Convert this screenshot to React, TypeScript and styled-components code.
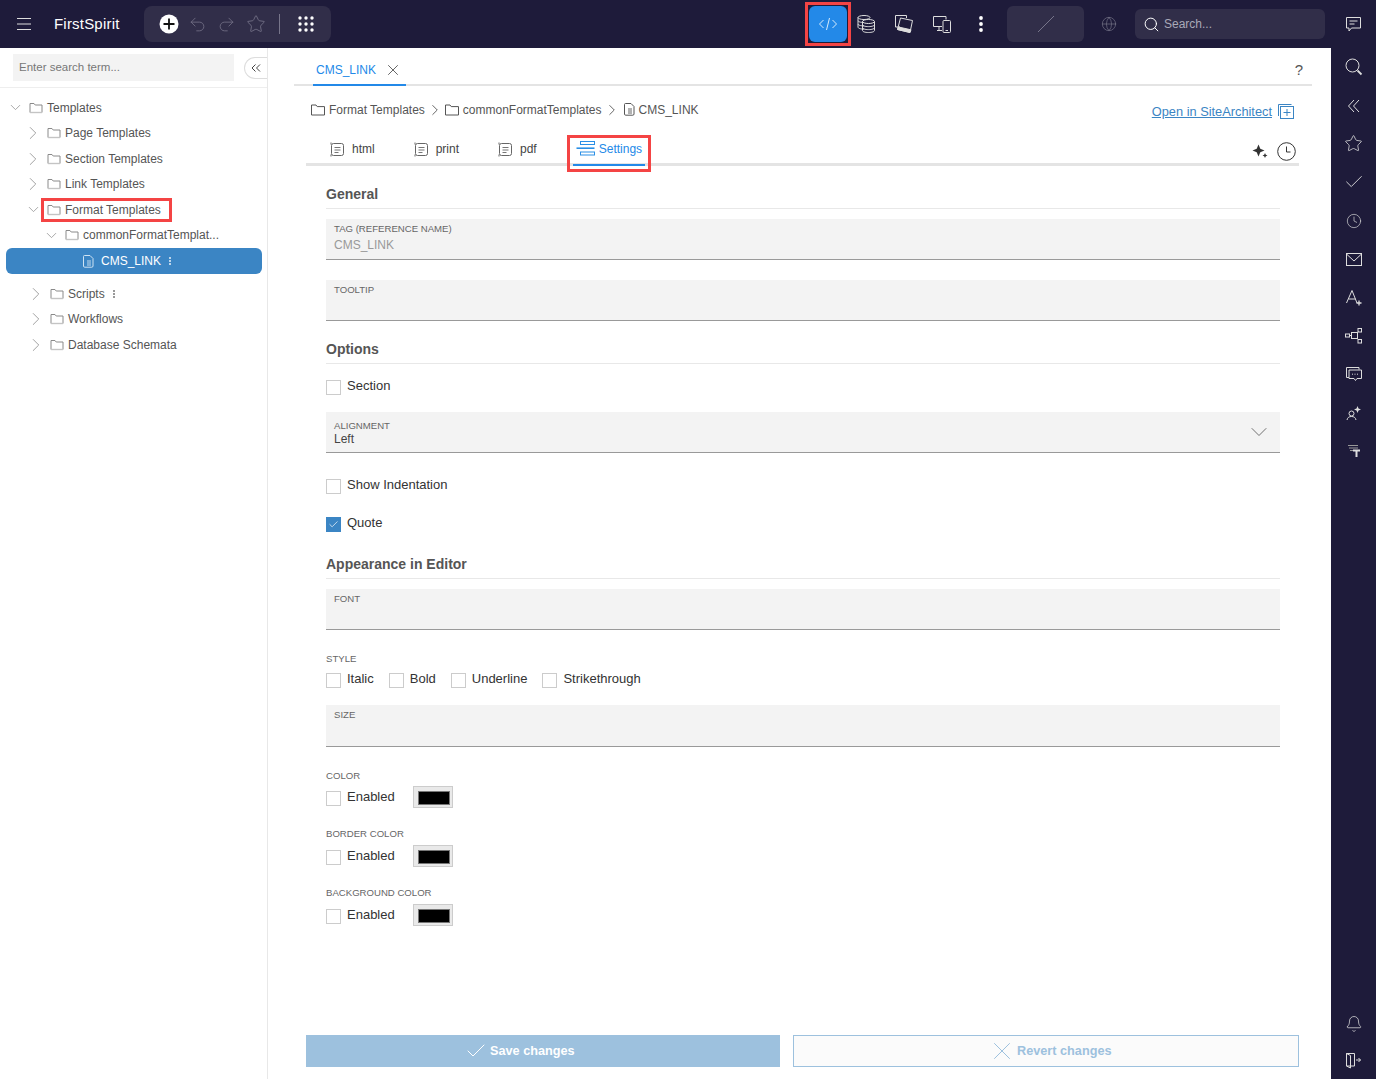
import React from "react";
import styled, { createGlobalStyle } from "styled-components";
import {
  Bell,
  Check,
  ChevronDown,
  ChevronRight,
  Clock,
  Globe,
  Redo2,
  Search,
  Star,
  Undo2,
  X,
} from "lucide-react";

const GlobalStyle = createGlobalStyle`
  html, body {
    margin: 0;
    height: 100%;
    overflow: hidden;
    background: #fff;
    font-family: "Liberation Sans", Arial, sans-serif;
    font-size: 12px;
    color: #555;
  }
  #root { height: 100%; }
  * { box-sizing: border-box; }
  svg { flex: none; }
`;

/* ---------- icons that the packages do not have ---------- */

const FolderIcon = () => (
  <svg width="14" height="12" viewBox="0 0 14 12" fill="none" stroke="#8a8a8a">
    <path d="M1 10.5V1.5h4l1.2 1.5h6.8v7.5z" />
    <path d="M1 10.5h12" stroke="#c4c4c4" strokeWidth="1.4" />
  </svg>
);

const DarkFolderIcon = () => (
  <svg width="14" height="12" viewBox="0 0 14 12" fill="none" stroke="#555">
    <path d="M.5 11V1h4.5l1.2 1.6h7.3V11z" />
  </svg>
);

const FileIcon = ({ color = "#555" }: { color?: string }) => (
  <svg width="11" height="13" viewBox="0 0 11 13" fill="none" stroke={color}>
    <path d="M1.5.5h5.5l3 3v7.5a1.2 1.2 0 0 1-1.2 1.2H1.7A1.2 1.2 0 0 1 .5 11V1.5a1 1 0 0 1 1-1z" />
    <path d="M4 6h4M4 8h4M4 10h4" strokeWidth=".9" />
  </svg>
);

const TemplateTabIcon = () => (
  <svg width="15" height="15" viewBox="0 0 15 15" fill="none" stroke="#666">
    <rect x="1.5" y="1.5" width="12" height="12" rx="2" />
    <path d="M4.5 5.5h6M4.5 8h6M4.5 10.5h4" strokeWidth=".9" />
    <path d="M1 .5v2M1 12.5v2" strokeWidth="1" />
  </svg>
);

const SettingsIcon = () => (
  <svg width="19" height="15" viewBox="0 0 19 15" fill="none" stroke="#2a8fe6">
    <rect x="4.5" y=".5" width="14" height="3" />
    <path d="M.5 7.2h18" strokeWidth="1.6" />
    <rect x="4.5" y="11" width="14" height="3" />
  </svg>
);

const MenuIcon = () => (
  <svg width="16" height="14" viewBox="0 0 16 14" stroke="#ddd" strokeWidth="1">
    <path d="M1 1.5h14M1 7h14M1 12.5h14" />
  </svg>
);

const AddIcon = () => (
  <svg width="20" height="20" viewBox="0 0 20 20">
    <circle cx="10" cy="10" r="9.5" fill="#fff" />
    <path d="M10 4.5v11M4.5 10h11" stroke="#111" strokeWidth="1.8" />
  </svg>
);

const GridIcon = () => (
  <svg width="16" height="16" viewBox="0 0 16 16" fill="#fff">
    {[2, 8, 14].map((y) =>
      [2, 8, 14].map((x) => <circle key={`${x}-${y}`} cx={x} cy={y} r="1.7" />)
    )}
  </svg>
);

const CodeIcon = () => (
  <svg width="20" height="14" viewBox="0 0 20 14" fill="none" stroke="#d6ebfc">
    <path d="M5.500 3 1.500 7l4 4M14.500 3l4 4-4 4M11.500 1 8.500 13" />
  </svg>
);

const DatabaseIcon = () => (
  <svg width="20" height="20" viewBox="0 0 20 20" fill="none" stroke="#ddd">
    <ellipse cx="8" cy="3.500" rx="6" ry="2" />
    <path d="M2 3.500v3c0 1.200 2.600 2 6 2M2 6.500v3.400c0 1.200 2.600 2 6 2M2 9.900v3.200c0 1.200 2.600 2 6 2" />
    <ellipse cx="12.500" cy="7.500" rx="6" ry="2" />
    <path d="M6.500 7.500v9c0 1.200 2.600 2 6 2s6-.8 6-2v-9M6.500 10.600c0 1.200 2.600 2 6 2s6-.8 6-2M6.500 13.600c0 1.200 2.600 2 6 2s6-.8 6-2" />
  </svg>
);

const PhotosIcon = () => (
  <svg width="20" height="20" viewBox="0 0 20 20" fill="none" stroke="#ddd">
    <path d="M6 13H1.500V1.500h11v2.500" />
    <path d="M6.500 4 18.500 6.500 16 18.500 3.500 15.500z" />
    <path d="M4.500 13 17 15.800 16 18.500 3.500 15.500z" fill="#ddd" />
  </svg>
);

const DevicesIcon = () => (
  <svg width="20" height="18" viewBox="0 0 20 18" fill="none" stroke="#ddd">
    <path d="M10 11.500H1.500v-10H14v3M5 15.500h5M7 11.500v4" />
    <rect x="11" y="5.500" width="7.500" height="12" rx="1" />
    <path d="M13.500 15.500h2.500" />
  </svg>
);

const DotsIcon = ({ color = "#fff", size = 16 }: { color?: string; size?: number }) => (
  <svg width="4" height={size} viewBox={`0 0 4 ${size}`} fill={color}>
    <circle cx="2" cy="2" r={size > 12 ? 1.9 : 1} />
    <circle cx="2" cy={size / 2} r={size > 12 ? 1.9 : 1} />
    <circle cx="2" cy={size - 2} r={size > 12 ? 1.9 : 1} />
  </svg>
);

const ChatIcon = () => (
  <svg width="17" height="17" viewBox="0 0 17 17" fill="none" stroke="#ddd">
    <path d="M1.500 1.500h14v10.500h-9l-2.500 3v-3h-2.500z" />
    <path d="M4.500 5h8M4.500 8h5" />
  </svg>
);

const RailSearchIcon = () => (
  <svg width="18" height="18" viewBox="0 0 18 18" fill="none" stroke="#ddd">
    <circle cx="7.500" cy="7.500" r="6.500" />
    <path d="M12.500 12.500 16.500 16.500" strokeWidth="1.800" />
  </svg>
);

const RailChevronsIcon = () => (
  <svg width="14" height="14" viewBox="0 0 14 14" fill="none" stroke="#ddd">
    <path d="M7 1 1.500 7 7 13M12 1 6.500 7 12 13" />
  </svg>
);

const MailIcon = () => (
  <svg width="16" height="13" viewBox="0 0 16 13" fill="none" stroke="#ddd">
    <rect x=".5" y=".5" width="15" height="12" />
    <path d="M.5 1 8 8l7.500-7" />
  </svg>
);

const FontSparkIcon = () => (
  <svg width="18" height="18" viewBox="0 0 18 18" fill="none" stroke="#ddd">
    <path d="M1.500 14 7 1.500 12 14M3.500 10h7" />
    <path d="M14 11.500v5M11.500 14h5" strokeWidth="1.300" />
  </svg>
);

const TreeIcon = () => (
  <svg width="18" height="16" viewBox="0 0 18 16" fill="none" stroke="#ddd">
    <rect x=".5" y="6" width="4" height="3" />
    <rect x="6.500" y="4.500" width="6" height="6" />
    <rect x="13" y=".5" width="3.500" height="3.500" />
    <rect x="13" y="11.500" width="3.500" height="3.500" />
    <path d="M4.500 7.500h2M12.500 4.500l1-1M12.500 10.500l1 1" />
  </svg>
);

const CommentsIcon = () => (
  <svg width="16" height="15" viewBox="0 0 16 15" fill="none" stroke="#ddd">
    <path d="M3 10.500H.500V.500h12.500v2" />
    <path d="M3 3h12.500v8.500H11l-1.500 2-1.500-2H3z" />
    <path d="M6 7.200h1M8.500 7.200h1M11 7.200h1" />
  </svg>
);

const UserSparkIcon = () => (
  <svg width="16" height="16" viewBox="0 0 16 16" fill="none" stroke="#ddd">
    <circle cx="5.500" cy="8.500" r="2.500" />
    <path d="M1 15c.5-2.500 2-3.500 4.500-3.500S9.500 12.500 10 15" />
    <path d="M11.500 1 12.500 3.500 15 4.500 12.500 5.500 11.500 8 10.500 5.500 8 4.500 10.500 3.500z" fill="#ddd" stroke="none" />
  </svg>
);

const TextFilterIcon = () => (
  <svg width="14" height="14" viewBox="0 0 14 14" fill="none" stroke="#999">
    <path d="M1 1.500h10M2 4h9M3 6.500h3" />
    <path d="M6 6.500h7M9.500 6v7" stroke="#ddd" strokeWidth="2" />
  </svg>
);

const ExitIcon = () => (
  <svg width="17" height="17" viewBox="0 0 17 17" fill="none" stroke="#ddd">
    <path d="M1.500 1.500h8v12.500h-8zM1.500 1.500l4 2v12.500l-4-2z" />
    <path d="M11 8h4.500M13.500 6l2 2-2 2" />
  </svg>
);

const SitePanelIcon = () => (
  <svg width="16" height="15" viewBox="0 0 16 15" fill="none" stroke="#3b85c4">
    <path d="M.5 12V.5h13" />
    <rect x="2.500" y="2.500" width="13" height="12" />
    <path d="M9 5v7M5.500 8.500h7" />
  </svg>
);

const SparkleIcon = () => (
  <svg width="16" height="16" viewBox="0 0 16 16" fill="#333">
    <path d="M6.500 1.500 8.300 5.700 12.500 7.500 8.300 9.300 6.500 13.500 4.700 9.300.5 7.500 4.700 5.700z" />
    <path d="M13 10l.8 1.700 1.700.8-1.700.8L13 15l-.8-1.700-1.700-.8 1.700-.8z" />
  </svg>
);

const ClockPlainIcon = () => (
  <svg width="19" height="19" viewBox="0 0 19 19" fill="none" stroke="#333">
    <circle cx="9.500" cy="9.500" r="8.800" />
    <path d="M9.500 4.500v5.500h4" />
  </svg>
);

/* ---------- shell ---------- */

const Page = styled.div`
  display: flex;
  flex-direction: column;
  height: 100vh;
`;

const TopBar = styled.header`
  display: flex;
  align-items: center;
  flex: none;
  height: 48px;
  background: #1e1b3a;
  color: #fff;
`;

const MenuButton = styled.div`
  display: flex;
  justify-content: center;
  width: 20px;
  margin: 0 20px 0 14px;
`;

const Brand = styled.div`
  width: 90px;
  padding-bottom: 1px;
  font-size: 15px;
  letter-spacing: 0.2px;
`;

const ToolGroup = styled.div`
  display: flex;
  align-items: center;
  width: 187px;
  height: 36px;
  padding-left: 15px;
  border-radius: 8px;
  background: #312e49;
  color: #77758a;
`;

const ToolCell = styled.div<{ $w: number; $after?: number }>`
  display: flex;
  align-items: center;
  justify-content: center;
  width: ${(p) => p.$w}px;
  margin-right: ${(p) => p.$after ?? 0}px;
`;

const ToolDivider = styled.div`
  width: 1px;
  height: 20px;
  margin: 0 18px 0 9px;
  background: #77758a;
`;

const TopRight = styled.div`
  display: flex;
  align-items: center;
  margin-left: auto;
`;

const ActiveFrame = styled.div`
  width: 46px;
  height: 44px;
  margin: 0 -4px;
  padding: 1px;
  border: 3px solid #f44444;
`;

const ActiveView = styled.div`
  display: flex;
  align-items: center;
  justify-content: center;
  height: 100%;
  border-radius: 6px;
  background: #2389e8;
`;

const ViewCell = styled.div`
  display: flex;
  align-items: center;
  justify-content: center;
  width: 38px;
`;

const DotsCell = styled(ViewCell)`
  width: 39px;
`;

const SlashBox = styled.div`
  display: flex;
  align-items: center;
  justify-content: center;
  width: 77px;
  height: 36px;
  margin-left: 7px;
  border-radius: 6px;
  background: #312e49;
`;

const GlobeCell = styled.div`
  display: flex;
  justify-content: center;
  width: 24px;
  margin: 0 14px 0 13px;
  color: #77758a;
`;

const TopSearch = styled.div`
  display: flex;
  align-items: center;
  gap: 4px;
  width: 190px;
  height: 30px;
  padding-left: 8px;
  border-radius: 6px;
  background: #312e49;
  color: #aaa9b8;
`;

const ChatCell = styled.div`
  display: flex;
  justify-content: center;
  width: 45px;
  margin-left: 6px;
`;

const Body = styled.div`
  display: flex;
  flex: 1;
  min-height: 0;
`;

/* ---------- tree ---------- */

const Sidebar = styled.aside`
  flex: none;
  width: 268px;
  border-right: 1px solid #e8e8e8;
`;

const SearchRow = styled.div`
  display: flex;
  align-items: center;
  height: 40px;
  padding-left: 13px;
  border-bottom: 1px solid #eee;
`;

const TreeSearch = styled.div`
  display: flex;
  align-items: center;
  width: 221px;
  height: 27px;
  padding: 0 0 2px 6px;
  background: #f3f3f3;
  color: #777;
  font-size: 11.5px;
`;

const CollapseButton = styled.div`
  display: flex;
  align-items: center;
  justify-content: center;
  width: 23px;
  height: 22px;
  margin-left: 10px;
  border: 1px solid #ddd;
  border-right: none;
  border-radius: 11px 0 0 11px;
  color: #444;
`;

const Tree = styled.div`
  padding-top: 7px;
`;

const TreeRow = styled.div<{ $pad: number }>`
  display: flex;
  align-items: center;
  height: 25.5px;
  padding-left: ${(p) => p.$pad}px;
  color: #555;
`;

const Twisty = styled.div`
  display: flex;
  justify-content: center;
  width: 10px;
  margin-right: 9px;
  color: #999;
`;

const TreeFolder = styled.div`
  display: flex;
  margin-right: 4px;
`;

const HighlightLabel = styled.div`
  display: flex;
  align-items: center;
  height: 18px;
  margin-left: -3px;
  padding: 0 8px 0 3px;
  outline: 3px solid #f44444;
`;

const SelectedRow = styled.div`
  display: flex;
  align-items: center;
  gap: 7px;
  height: 26px;
  margin: 0 5px 7px 6px;
  padding-left: 77px;
  border-radius: 6px;
  background: #3b85c4;
  color: #fff;
`;

const RowDots = styled.span`
  display: inline-flex;
  margin-left: 7px;
`;

/* ---------- main ---------- */

const Main = styled.main`
  display: flex;
  flex-direction: column;
  flex: 1;
  min-width: 0;
`;

const TabStrip = styled.div`
  display: flex;
  align-items: flex-end;
  justify-content: space-between;
  flex: none;
  height: 38px;
  margin: 0 19px 0 26px;
  padding-left: 19px;
  border-bottom: 2px solid #e4e4e4;
`;

const DocTab = styled.div`
  display: flex;
  align-items: center;
  gap: 8px;
  width: 93px;
  height: 32px;
  margin-bottom: -2px;
  padding: 2px 0 0 3px;
  border-bottom: 2px solid #2389e8;
  color: #2389e8;
  & > svg {
    color: #555;
  }
`;

const Help = styled.div`
  height: 32px;
  padding: 10px 9px 0 0;
  color: #555;
  font-size: 15px;
  line-height: 16px;
`;

const CrumbRow = styled.div`
  display: flex;
  align-items: center;
  flex: none;
  height: 25px;
  margin: 11px 37px 0 43px;
  color: #555;
`;

const Crumb = styled.div`
  display: flex;
  align-items: center;
  gap: 4px;
`;

const CrumbSep = styled.div<{ $after?: number }>`
  display: flex;
  margin: 0 ${(p) => p.$after ?? 1}px 0 1px;
  color: #555;
`;

const SiteLink = styled.a`
  display: flex;
  align-items: center;
  gap: 6px;
  margin-left: auto;
  padding-top: 3px;
  color: #3b85c4;
  font-size: 12.8px;
  text-decoration: underline;
`;

const SubTabs = styled.div`
  display: flex;
  align-items: center;
  flex: none;
  height: 31px;
  margin: 13px 32px 0 38px;
  padding-left: 4.5px;
  border-bottom: 3px solid #e4e4e4;
`;

const SubTab = styled.div`
  display: flex;
  align-items: center;
  gap: 7px;
  height: 100%;
  padding: 0 19.5px;
  color: #444;
`;

const SettingsTab = styled.div`
  display: flex;
  align-items: center;
  align-self: flex-end;
  gap: 4px;
  height: 25px;
  margin: 0 0 -3px 16.5px;
  padding: 0 3px 8px;
  border-bottom: 2px solid #2389e8;
  color: #2389e8;
  outline: 3px solid #f44444;
  outline-offset: 3px;
`;

const SubActions = styled.div`
  display: flex;
  align-items: center;
  gap: 9px;
  margin-left: auto;
  padding: 4px 3px 0 0;
`;

const Form = styled.div`
  flex: 1;
  margin: 0 51px 0 58px;
`;

const Heading = styled.h3<{ $top: number }>`
  height: 29px;
  margin: ${(p) => p.$top}px 0 0;
  padding-top: 6px;
  border-bottom: 1px solid #e8e8e8;
  color: #555;
  font-size: 14px;
  font-weight: 700;
  line-height: 16px;
`;

const Field = styled.div<{ $top: number; $h?: number; $padTop?: number }>`
  position: relative;
  height: ${(p) => p.$h ?? 41}px;
  margin-top: ${(p) => p.$top}px;
  padding: ${(p) => p.$padTop ?? 4}px 8px 0;
  border-bottom: 1px solid #999;
  background: #f3f3f3;
`;

const FieldLabel = styled.div`
  height: 12px;
  color: #666;
  font-size: 9.6px;
  line-height: 12px;
  text-transform: uppercase;
`;

const FieldValue = styled.div<{ $muted?: boolean }>`
  height: 16px;
  margin-top: ${(p) => (p.$muted ? 2 : -1)}px;
  color: ${(p) => (p.$muted ? "#999" : "#444")};
  font-size: 12px;
  line-height: 16px;
`;

const SelectArrow = styled.div`
  position: absolute;
  top: 6px;
  right: 7px;
  display: flex;
  color: #666;
`;

const CheckRow = styled.div<{ $top: number }>`
  display: flex;
  align-items: center;
  height: 22px;
  margin-top: ${(p) => p.$top}px;
`;

const CheckLabel = styled.label`
  display: flex;
  align-items: center;
  gap: 6px;
  margin-right: 15px;
  padding-bottom: 2px;
  color: #333;
  font-size: 13px;
`;

const Box = styled.span<{ $on?: boolean }>`
  display: inline-flex;
  align-items: center;
  justify-content: center;
  width: 15px;
  height: 15px;
  margin-top: 4px;
  border: 1px solid ${(p) => (p.$on ? "#3b85c4" : "#ccc")};
  background: ${(p) => (p.$on ? "#3b85c4" : "#fff")};
  color: #fff;
`;

const GroupLabel = styled.div<{ $top: number }>`
  height: 12px;
  margin-top: ${(p) => p.$top}px;
  color: #666;
  font-size: 9.6px;
  line-height: 12px;
  text-transform: uppercase;
`;

const Swatch = styled.div`
  width: 40px;
  height: 22px;
  padding: 4px;
  border: 1px solid #ccc;
  background: #e9e9e9;
  &::after {
    content: "";
    display: block;
    width: 100%;
    height: 100%;
    border: 1px solid #777;
    background: #000;
  }
`;

const ColorRow = styled.div<{ $top: number }>`
  display: flex;
  align-items: center;
  height: 22px;
  margin-top: ${(p) => p.$top}px;
  & > label {
    margin-right: 18px;
  }
`;

const Footer = styled.div`
  display: grid;
  grid-template-columns: 474px 506px;
  column-gap: 13px;
  flex: none;
  margin: 0 32px 12px 38px;
`;

const SaveButton = styled.div`
  display: flex;
  align-items: center;
  gap: 2px;
  height: 32px;
  padding-left: 158px;
  background: #9dc1de;
  color: #fff;
  font-size: 12.7px;
  font-weight: 700;
`;

const RevertButton = styled.div`
  display: flex;
  align-items: center;
  height: 32px;
  padding-left: 193px;
  border: 1px solid #9dc1de;
  background: #fbfbfb;
  color: #9dc1de;
  font-size: 12.7px;
  font-weight: 700;
`;

/* ---------- right rail ---------- */

const Rail = styled.nav`
  display: flex;
  flex-direction: column;
  justify-content: space-between;
  flex: none;
  width: 45px;
  background: #1e1b3a;
  color: #ddd;
`;

const RailGroup = styled.div`
  display: flex;
  flex-direction: column;
`;

const RailCell = styled.div`
  display: flex;
  align-items: center;
  justify-content: center;
  height: 38.4px;
`;

const RailBottomCell = styled(RailCell)`
  height: 37px;
`;

/* ---------- data ---------- */

const treeTop = ["Page Templates", "Section Templates", "Link Templates"];
const treeBottom = ["Workflows", "Database Schemata"];

const railIcons = [
  <RailSearchIcon key="s" />,
  <RailChevronsIcon key="c" />,
  <Star key="st" size={19} strokeWidth={1} />,
  <Check key="ch" size={22} strokeWidth={1} />,
  <Clock key="cl" size={16} strokeWidth={1} />,
  <MailIcon key="m" />,
  <FontSparkIcon key="f" />,
  <TreeIcon key="t" />,
  <CommentsIcon key="cm" />,
  <UserSparkIcon key="u" />,
  <TextFilterIcon key="tf" />,
];

const Check15 = ({ label, on }: { label: string; on?: boolean }) => (
  <CheckLabel>
    <Box $on={on}>{on && <Check size={11} strokeWidth={1.5} />}</Box>
    {label}
  </CheckLabel>
);

const TwistyOpen = () => (
  <Twisty>
    <ChevronDown size={17} strokeWidth={1.2} />
  </Twisty>
);

const TwistyClosed = () => (
  <Twisty>
    <ChevronRight size={22} strokeWidth={1} />
  </Twisty>
);

export default function App() {
  return (
    <Page>
      <GlobalStyle />
      <TopBar>
        <MenuButton>
          <MenuIcon />
        </MenuButton>
        <Brand>FirstSpirit</Brand>
        <ToolGroup>
          <ToolCell $w={20} $after={4}>
            <AddIcon />
          </ToolCell>
          <ToolCell $w={29}>
            <Undo2 size={19} strokeWidth={1} />
          </ToolCell>
          <ToolCell $w={29}>
            <Redo2 size={19} strokeWidth={1} />
          </ToolCell>
          <ToolCell $w={29}>
            <Star size={20} strokeWidth={1} />
          </ToolCell>
          <ToolDivider />
          <ToolCell $w={16}>
            <GridIcon />
          </ToolCell>
        </ToolGroup>
        <TopRight>
          <ActiveFrame>
            <ActiveView>
              <CodeIcon />
            </ActiveView>
          </ActiveFrame>
          <ViewCell>
            <DatabaseIcon />
          </ViewCell>
          <ViewCell>
            <PhotosIcon />
          </ViewCell>
          <ViewCell>
            <DevicesIcon />
          </ViewCell>
          <DotsCell>
            <DotsIcon />
          </DotsCell>
          <SlashBox>
            <svg width="18" height="18" viewBox="0 0 18 18" stroke="#77758a">
              <path d="M1 17 17 1" />
            </svg>
          </SlashBox>
          <GlobeCell>
            <Globe size={16} strokeWidth={1} />
          </GlobeCell>
          <TopSearch>
            <Search size={17} strokeWidth={1.4} color="#fff" />
            Search...
          </TopSearch>
          <ChatCell>
            <ChatIcon />
          </ChatCell>
        </TopRight>
      </TopBar>
      <Body>
        <Sidebar>
          <SearchRow>
            <TreeSearch>Enter search term...</TreeSearch>
            <CollapseButton>
              <svg width="10" height="8" viewBox="0 0 10 8" fill="none" stroke="#444">
                <path d="M4.500.5 1 4l3.500 3.500M9 .5 5.500 4 9 7.500" />
              </svg>
            </CollapseButton>
          </SearchRow>
          <Tree>
            <TreeRow $pad={10}>
              <TwistyOpen />
              <TreeFolder>
                <FolderIcon />
              </TreeFolder>
              Templates
            </TreeRow>
            {treeTop.map((label) => (
              <TreeRow key={label} $pad={28}>
                <TwistyClosed />
                <TreeFolder>
                  <FolderIcon />
                </TreeFolder>
                {label}
              </TreeRow>
            ))}
            <TreeRow $pad={28}>
              <TwistyOpen />
              <HighlightLabel>
                <TreeFolder>
                  <FolderIcon />
                </TreeFolder>
                Format Templates
              </HighlightLabel>
            </TreeRow>
            <TreeRow $pad={46}>
              <TwistyOpen />
              <TreeFolder>
                <FolderIcon />
              </TreeFolder>
              commonFormatTemplat...
            </TreeRow>
            <SelectedRow>
              <FileIcon color="#cfe3f3" />
              <span>CMS_LINK</span>
              <DotsIcon color="#e8f1f8" size={10} />
            </SelectedRow>
            <TreeRow $pad={31}>
              <TwistyClosed />
              <TreeFolder>
                <FolderIcon />
              </TreeFolder>
              Scripts
              <RowDots>
                <DotsIcon color="#777" size={10} />
              </RowDots>
            </TreeRow>
            {treeBottom.map((label) => (
              <TreeRow key={label} $pad={31}>
                <TwistyClosed />
                <TreeFolder>
                  <FolderIcon />
                </TreeFolder>
                {label}
              </TreeRow>
            ))}
          </Tree>
        </Sidebar>
        <Main>
          <TabStrip>
            <DocTab>
              CMS_LINK
              <X size={18} strokeWidth={1.2} />
            </DocTab>
            <Help>?</Help>
          </TabStrip>
          <CrumbRow>
            <Crumb>
              <DarkFolderIcon />
              Format Templates
            </Crumb>
            <CrumbSep>
              <ChevronRight size={18} strokeWidth={1.2} />
            </CrumbSep>
            <Crumb>
              <DarkFolderIcon />
              commonFormatTemplates
            </Crumb>
            <CrumbSep $after={3}>
              <ChevronRight size={18} strokeWidth={1.2} />
            </CrumbSep>
            <Crumb>
              <FileIcon />
              CMS_LINK
            </Crumb>
            <SiteLink>
              Open in SiteArchitect
              <SitePanelIcon />
            </SiteLink>
          </CrumbRow>
          <SubTabs>
            {["html", "print", "pdf"].map((t) => (
              <SubTab key={t}>
                <TemplateTabIcon />
                {t}
              </SubTab>
            ))}
            <SettingsTab>
              <SettingsIcon />
              Settings
            </SettingsTab>
            <SubActions>
              <SparkleIcon />
              <ClockPlainIcon />
            </SubActions>
          </SubTabs>
          <Form>
            <Heading $top={14}>General</Heading>
            <Field $top={10}>
              <FieldLabel>Tag (reference name)</FieldLabel>
              <FieldValue $muted>CMS_LINK</FieldValue>
            </Field>
            <Field $top={20}>
              <FieldLabel>Tooltip</FieldLabel>
            </Field>
            <Heading $top={14}>Options</Heading>
            <CheckRow $top={11}>
              <Check15 label="Section" />
            </CheckRow>
            <Field $top={15} $padTop={8}>
              <FieldLabel>Alignment</FieldLabel>
              <FieldValue>Left</FieldValue>
              <SelectArrow>
                <ChevronDown size={28} strokeWidth={0.8} />
              </SelectArrow>
            </Field>
            <CheckRow $top={21}>
              <Check15 label="Show Indentation" />
            </CheckRow>
            <CheckRow $top={16}>
              <Check15 label="Quote" on />
            </CheckRow>
            <Heading $top={16}>Appearance in Editor</Heading>
            <Field $top={10}>
              <FieldLabel>Font</FieldLabel>
            </Field>
            <GroupLabel $top={23}>Style</GroupLabel>
            <CheckRow $top={3}>
              <Check15 label="Italic" />
              <Check15 label="Bold" />
              <Check15 label="Underline" />
              <Check15 label="Strikethrough" />
            </CheckRow>
            <Field $top={15} $h={42}>
              <FieldLabel>Size</FieldLabel>
            </Field>
            <GroupLabel $top={23}>Color</GroupLabel>
            <ColorRow $top={4}>
              <Check15 label="Enabled" />
              <Swatch />
            </ColorRow>
            <GroupLabel $top={20}>Border Color</GroupLabel>
            <ColorRow $top={5}>
              <Check15 label="Enabled" />
              <Swatch />
            </ColorRow>
            <GroupLabel $top={20}>Background Color</GroupLabel>
            <ColorRow $top={5}>
              <Check15 label="Enabled" />
              <Swatch />
            </ColorRow>
          </Form>
          <Footer>
            <SaveButton>
              <Check size={24} strokeWidth={1} />
              Save changes
            </SaveButton>
            <RevertButton>
              <X size={30} strokeWidth={0.8} />
              Revert changes
            </RevertButton>
          </Footer>
        </Main>
        <Rail>
          <RailGroup>
            {railIcons.map((icon, i) => (
              <RailCell key={i}>{icon}</RailCell>
            ))}
          </RailGroup>
          <RailGroup>
            <RailBottomCell>
              <Bell size={18} strokeWidth={1} />
            </RailBottomCell>
            <RailBottomCell>
              <ExitIcon />
            </RailBottomCell>
          </RailGroup>
        </Rail>
      </Body>
    </Page>
  );
}
